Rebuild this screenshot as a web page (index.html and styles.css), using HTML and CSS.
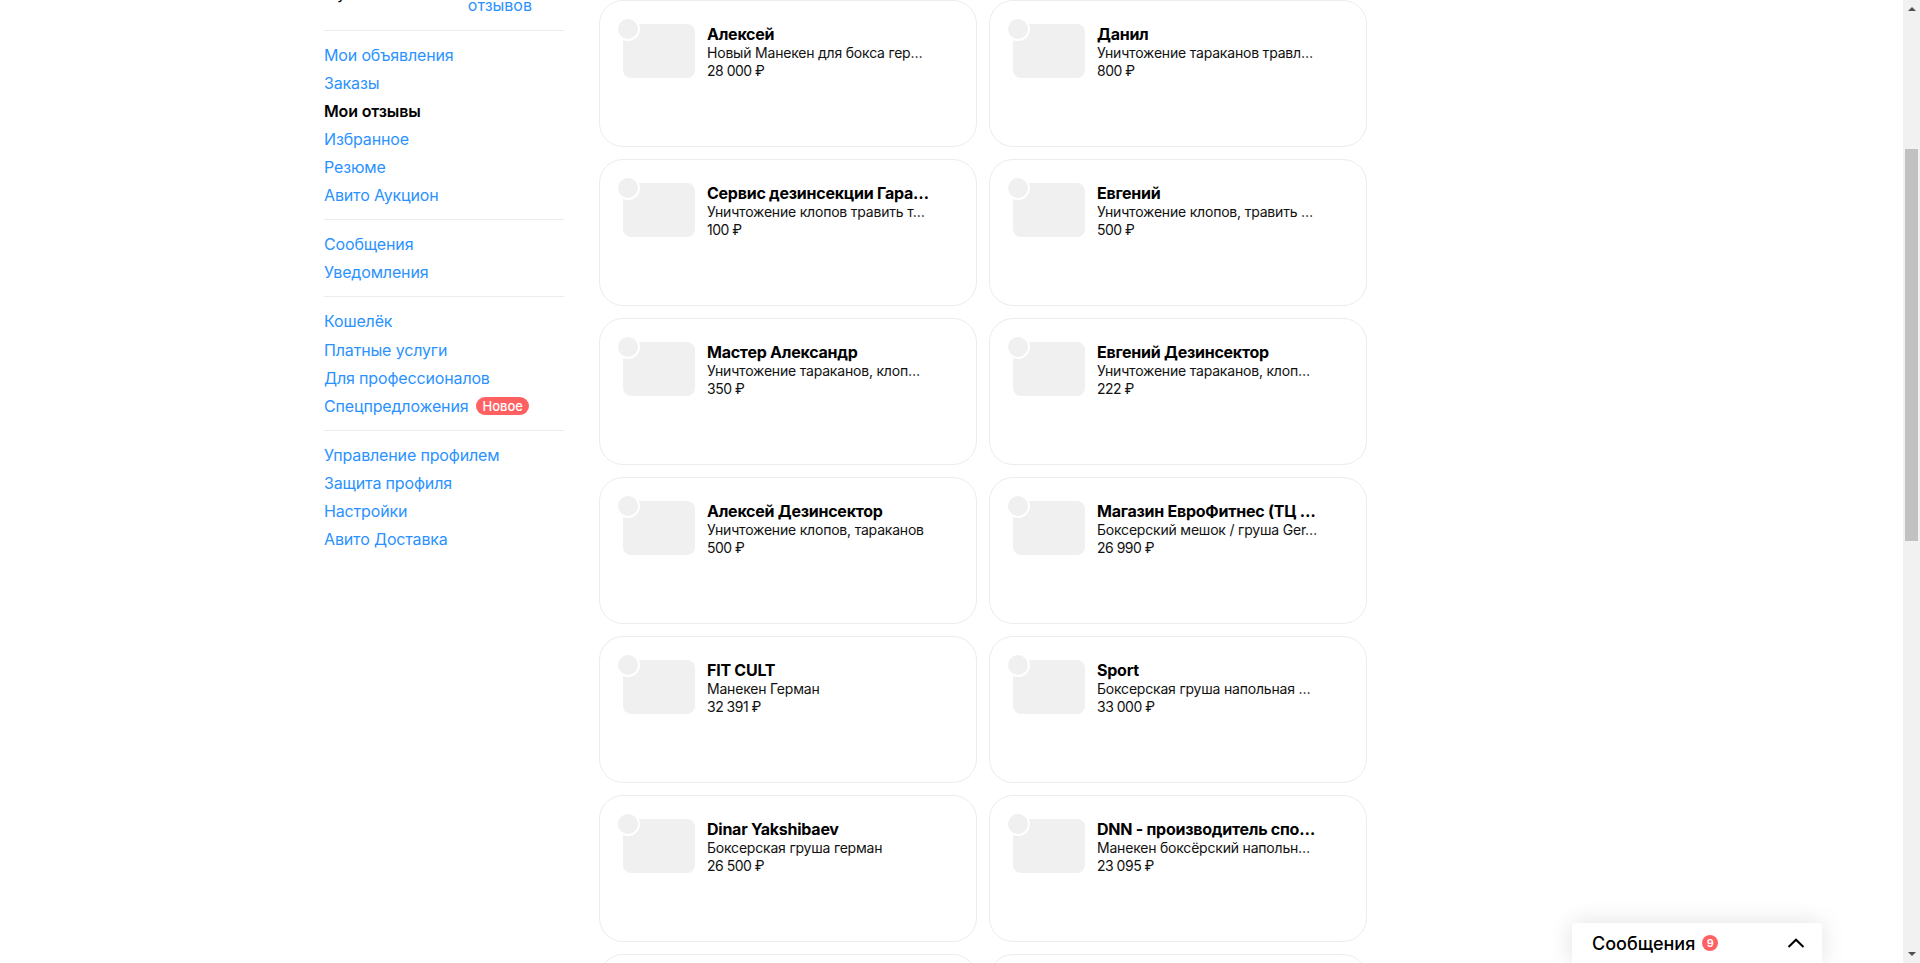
FILE: index.html
```html
<!DOCTYPE html>
<html lang="ru">
<head>
<meta charset="utf-8">
<title>Мои отзывы</title>
<link rel="stylesheet" href="styles.css">
</head>
<body>
<div class="viewport">
  <div class="page">
    <aside class="sidebar">
      <div class="summary"><span class="summary-name">у</span><a class="summary-link">отзывов</a></div>
      <nav class="group">
        <a class="item">Мои объявления</a>
        <a class="item">Заказы</a>
        <a class="item active">Мои отзывы</a>
        <a class="item">Избранное</a>
        <a class="item">Резюме</a>
        <a class="item">Авито Аукцион</a>
      </nav>
      <nav class="group">
        <a class="item">Сообщения</a>
        <a class="item">Уведомления</a>
      </nav>
      <nav class="group">
        <a class="item item-spaced">Кошелёк</a>
        <a class="item">Платные услуги</a>
        <a class="item">Для профессионалов</a>
        <a class="item">Спецпредложения<span class="tag">Новое</span></a>
      </nav>
      <nav class="group">
        <a class="item">Управление профилем</a>
        <a class="item">Защита профиля</a>
        <a class="item">Настройки</a>
        <a class="item">Авито Доставка</a>
      </nav>
    </aside>
    <main class="cards">
      <article class="card"><div class="thumb"><span class="dot"></span></div><div class="info"><div class="title">Алексей</div><div class="line">Новый Манекен для бокса гер…</div><div class="line price">28 000 ₽</div></div></article>
      <article class="card"><div class="thumb"><span class="dot"></span></div><div class="info"><div class="title">Данил</div><div class="line">Уничтожение тараканов травл…</div><div class="line price">800 ₽</div></div></article>
      <article class="card"><div class="thumb"><span class="dot"></span></div><div class="info"><div class="title">Сервис дезинсекции Гара…</div><div class="line">Уничтожение клопов травить т…</div><div class="line price">100 ₽</div></div></article>
      <article class="card"><div class="thumb"><span class="dot"></span></div><div class="info"><div class="title">Евгений</div><div class="line">Уничтожение клопов, травить …</div><div class="line price">500 ₽</div></div></article>
      <article class="card"><div class="thumb"><span class="dot"></span></div><div class="info"><div class="title">Мастер Александр</div><div class="line">Уничтожение тараканов, клоп…</div><div class="line price">350 ₽</div></div></article>
      <article class="card"><div class="thumb"><span class="dot"></span></div><div class="info"><div class="title">Евгений Дезинсектор</div><div class="line">Уничтожение тараканов, клоп…</div><div class="line price">222 ₽</div></div></article>
      <article class="card"><div class="thumb"><span class="dot"></span></div><div class="info"><div class="title">Алексей Дезинсектор</div><div class="line">Уничтожение клопов, тараканов</div><div class="line price">500 ₽</div></div></article>
      <article class="card"><div class="thumb"><span class="dot"></span></div><div class="info"><div class="title">Магазин ЕвроФитнес (ТЦ …</div><div class="line">Боксерский мешок / груша Ger…</div><div class="line price">26 990 ₽</div></div></article>
      <article class="card"><div class="thumb"><span class="dot"></span></div><div class="info"><div class="title">FIT CULT</div><div class="line">Манекен Герман</div><div class="line price">32 391 ₽</div></div></article>
      <article class="card"><div class="thumb"><span class="dot"></span></div><div class="info"><div class="title">Sport</div><div class="line">Боксерская груша напольная …</div><div class="line price">33 000 ₽</div></div></article>
      <article class="card"><div class="thumb"><span class="dot"></span></div><div class="info"><div class="title">Dinar Yakshibaev</div><div class="line">Боксерская груша герман</div><div class="line price">26 500 ₽</div></div></article>
      <article class="card"><div class="thumb"><span class="dot"></span></div><div class="info"><div class="title">DNN - производитель спо…</div><div class="line">Манекен боксёрский напольн…</div><div class="line price">23 095 ₽</div></div></article>
      <article class="card"></article>
      <article class="card"></article>
    </main>
  </div>
  <section class="chat">
    <span class="chat-title">Сообщения</span>
    <span class="chat-badge">9</span>
    <svg class="chat-chevron" width="18" height="10" viewBox="0 0 18 10" fill="none"><path d="M1.5 9 9 1.7 16.5 9" stroke="#000" stroke-width="2"/></svg>
  </section>
</div>
<div class="scrollbar">
  <span class="arrow-up"></span>
  <div class="track"><div class="thumb-bar"></div></div>
  <span class="arrow-down"></span>
</div>
</body>
</html>
```
FILE: styles.css
```css
* { box-sizing: border-box; }
html, body { height: 100%; }
body {
  margin: 0;
  display: flex;
  overflow: hidden;
  background: #fff;
  color: #000;
  font-family: Inter, "Noto Sans", "Liberation Sans", sans-serif;
}
.viewport {
  flex: 1;
  min-width: 0;
  height: 100%;
  overflow: hidden;
  position: relative;
}
.page {
  display: flex;
  gap: 35px;
  padding-left: 324px;
}
.sidebar {
  width: 240px;
  flex: none;
}
.summary {
  display: flex;
  justify-content: space-between;
  border-bottom: 1px solid #ececec;
  font-size: 16px;
  line-height: 20px;
  margin-top: -5px;
  height: 36px;
}
.summary-name {
  margin-left: 13px;
  margin-top: -12px;
  color: #000;
}
.summary-link {
  color: #2a92ff;
  margin-right: 32px;
}
.group {
  display: flex;
  flex-direction: column;
  padding: 10px 0;
  border-bottom: 1px solid #ececec;
}
.group:last-child { border-bottom: 0; }
.item {
  height: 28px;
  line-height: 28px;
  font-size: 16px;
  color: #2a92ff;
  white-space: nowrap;
  letter-spacing: -.15px;
}
.item-spaced { margin-bottom: 1px; }
.active {
  color: #000;
  font-weight: 600;
}
.tag {
  display: inline-block;
  margin-left: 8px;
  padding: 0 6px;
  height: 18px;
  line-height: 18px;
  border-radius: 9px;
  background: #ff6163;
  color: #fff;
  font-size: 13px;
  font-weight: 500;
  letter-spacing: 0;
  vertical-align: 1px;
}
.cards {
  width: 768px;
  display: grid;
  grid-template-columns: 378px 378px;
  grid-auto-rows: 147px;
  gap: 12px;
}
.card {
  display: flex;
  padding: 23px 23px 0;
  gap: 12px;
  border: 1px solid #ececec;
  border-radius: 24px;
}
.thumb {
  position: relative;
  width: 72px;
  height: 54px;
  border-radius: 8px;
  background: #f0f0f0;
  flex: none;
}
.dot {
  position: absolute;
  left: -7px;
  top: -7px;
  width: 24px;
  height: 24px;
  border-radius: 50%;
  background: #f0f0f0;
  border: 2px solid #fff;
}
.info {
  min-width: 0;
  flex: 1;
  white-space: nowrap;
}
.title {
  font-size: 16px;
  line-height: 20px;
  font-weight: 700;
  letter-spacing: -.25px;
}
.line {
  font-size: 14px;
  line-height: 18px;
  color: #111;
  letter-spacing: -.2px;
}
.price { letter-spacing: -.5px; }
.chat {
  position: absolute;
  right: 81px;
  bottom: 0;
  width: 250px;
  height: 40px;
  padding: 0 17px 0 20px;
  display: flex;
  align-items: center;
  background: #fff;
  border-radius: 4px 4px 0 0;
  box-shadow: 0 0 24px rgba(0,0,0,.12);
}
.chat-title {
  font-size: 18px;
  font-weight: 500;
}
.chat-badge {
  width: 16px;
  height: 16px;
  margin-left: 7px;
  border-radius: 50%;
  background: #ff6163;
  color: #fff;
  font-size: 11px;
  font-weight: 600;
  line-height: 16px;
  text-align: center;
}
.chat-chevron { margin-left: auto; }
.scrollbar {
  width: 17px;
  flex: none;
  height: 100%;
  background: #f1f1f1;
  display: flex;
  flex-direction: column;
  align-items: center;
}
.arrow-up, .arrow-down {
  width: 0;
  height: 0;
  border-left: 4px solid transparent;
  border-right: 4px solid transparent;
  flex: none;
}
.arrow-up { border-bottom: 4px solid #505050; margin-top: 7px; }
.arrow-down { border-top: 4px solid #505050; margin-bottom: 7px; }
.track { flex: 1; width: 100%; padding: 0 2px; }
.thumb-bar {
  margin-top: 138px;
  height: 392px;
  background: #c1c1c1;
}
```
